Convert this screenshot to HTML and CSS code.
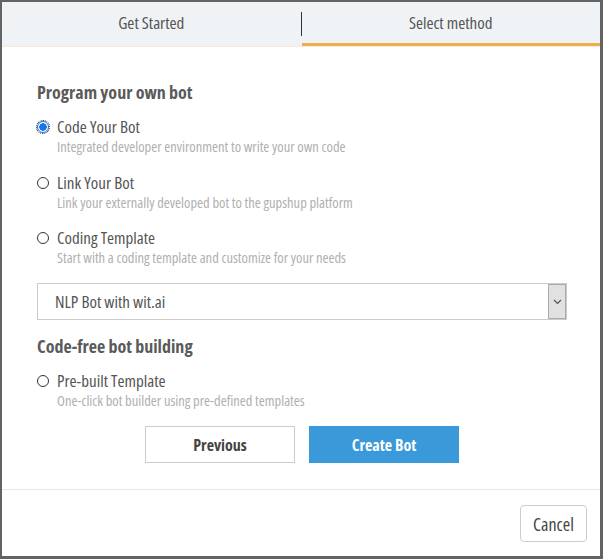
FILE: index.html
```html
<!DOCTYPE html>
<html>
<head>
<meta charset="utf-8">
<link rel="stylesheet" href="styles.css">
</head>
<body>
<div class="modal">
  <div class="tabs">
    <div class="tab">Get Started</div>
    <div class="sep"></div>
    <div class="tab active">Select method</div>
  </div>
  <div class="content">
    <h2 class="heading first">Program your own bot</h2>
    <label class="option">
      <span class="radio checked"></span>
      <span class="text">
        <span class="label">Code Your Bot</span>
        <span class="desc">Integrated developer environment to write your own code</span>
      </span>
    </label>
    <label class="option">
      <span class="radio"></span>
      <span class="text">
        <span class="label">Link Your Bot</span>
        <span class="desc">Link your externally developed bot to the gupshup platform</span>
      </span>
    </label>
    <label class="option">
      <span class="radio"></span>
      <span class="text">
        <span class="label">Coding Template</span>
        <span class="desc">Start with a coding template and customize for your needs</span>
      </span>
    </label>
    <div class="select">
      <span class="select-value">NLP Bot with wit.ai</span>
      <span class="select-btn">
        <svg width="9" height="6" viewBox="0 0 9 6"><path d="M1 1 L4.5 4.5 L8 1" fill="none" stroke="#555" stroke-width="1.2"/></svg>
      </span>
    </div>
    <h2 class="heading">Code-free bot building</h2>
    <label class="option">
      <span class="radio"></span>
      <span class="text">
        <span class="label">Pre-built Template</span>
        <span class="desc">One-click bot builder using pre-defined templates</span>
      </span>
    </label>
    <div class="actions">
      <button class="btn btn-default">Previous</button>
      <button class="btn btn-primary">Create Bot</button>
    </div>
  </div>
  <div class="footer">
    <button class="btn-cancel">Cancel</button>
  </div>
</div>
</body>
</html>
```
FILE: styles.css
```css
html, body {
  margin: 0;
  padding: 0;
}
body {
  background: #636363;
  padding: 2px 3px 3px 2px;
  font-family: "Open Sans", "DejaVu Sans Condensed", sans-serif;
  font-stretch: 80%;
  color: #555;
}
.modal {
  background: #fff;
  height: 554px;
  display: flex;
  flex-direction: column;
}
.tabs {
  display: flex;
  background: #f0f3f6;
  height: 44px;
  border-bottom: 1px solid #f7ead4;
  box-sizing: content-box;
}
.tab {
  flex: 1;
  height: 41px;
  line-height: 41px;
  text-align: center;
  font-size: 17px;
  font-stretch: 81%;
  color: #555;
}
.tab.active {
  border-bottom: 3px solid #f0ad4e;
}
.sep {
  width: 1px;
  height: 24px;
  margin-top: 10px;
  background: #333;
}
.content {
  padding: 0 33px 26px 35px;
  display: flex;
  flex-direction: column;
  border-bottom: 1px solid #e8e8e8;
}
.heading {
  margin: 16px 0 0;
  font-size: 18px;
  font-stretch: 77%;
  line-height: 20px;
  font-weight: bold;
  color: #5a5a5a;
}
.heading.first {
  margin-top: 35px;
}
.option {
  display: flex;
  align-items: flex-start;
  gap: 8px;
  margin-top: 15px;
}
.option + .option {
  margin-top: 15.5px;
}
.radio {
  width: 10px;
  height: 10px;
  border: 1px solid #333;
  border-radius: 50%;
  margin-top: 4px;
  flex: none;
  box-sizing: content-box;
}
.radio.checked {
  border-color: #1a73e8;
  background: radial-gradient(circle, #1a73e8 0 3.5px, #fff 4px);
  outline: 1px dotted #222;
  outline-offset: 0px;
}
.text {
  display: flex;
  flex-direction: column;
}
.label {
  font-size: 17px;
  font-stretch: 81%;
  line-height: 20px;
  color: #555;
}
.desc {
  font-size: 14.5px;
  font-stretch: 75%;
  line-height: 20px;
  color: #b0b0b0;
}
.select {
  margin-top: 15px;
  height: 37px;
  border: 1px solid #ccc;
  box-sizing: border-box;
  display: flex;
  align-items: stretch;
}
.select-value {
  flex: 1;
  padding-left: 17px;
  line-height: 35px;
  font-size: 17px;
  color: #555;
}
.select-btn {
  width: 16px;
  background: #e1e1e1;
  border: 1px solid #aaa;
  display: flex;
  align-items: center;
  justify-content: center;
}
.actions {
  margin-top: 15px;
  display: flex;
  justify-content: center;
  gap: 14px;
}
.btn {
  width: 150px;
  height: 37px;
  font-family: inherit;
  font-stretch: inherit;
  font-size: 16px;
  font-weight: bold;
  border-radius: 0;
  cursor: pointer;
}
.btn-default {
  background: #fff;
  border: 1px solid #ccc;
  color: #444;
}
.btn-primary {
  background: #3a99d9;
  border: 1px solid #3a99d9;
  color: #fff;
}
.footer {
  display: flex;
  justify-content: flex-end;
  padding: 15px 13px 0 0;
}
.btn-cancel {
  width: 67px;
  height: 37px;
  background: #fff;
  border: 1px solid #ccc;
  border-radius: 4px;
  font-family: inherit;
  font-stretch: 84%;
  font-size: 18px;
  color: #444;
}
```
